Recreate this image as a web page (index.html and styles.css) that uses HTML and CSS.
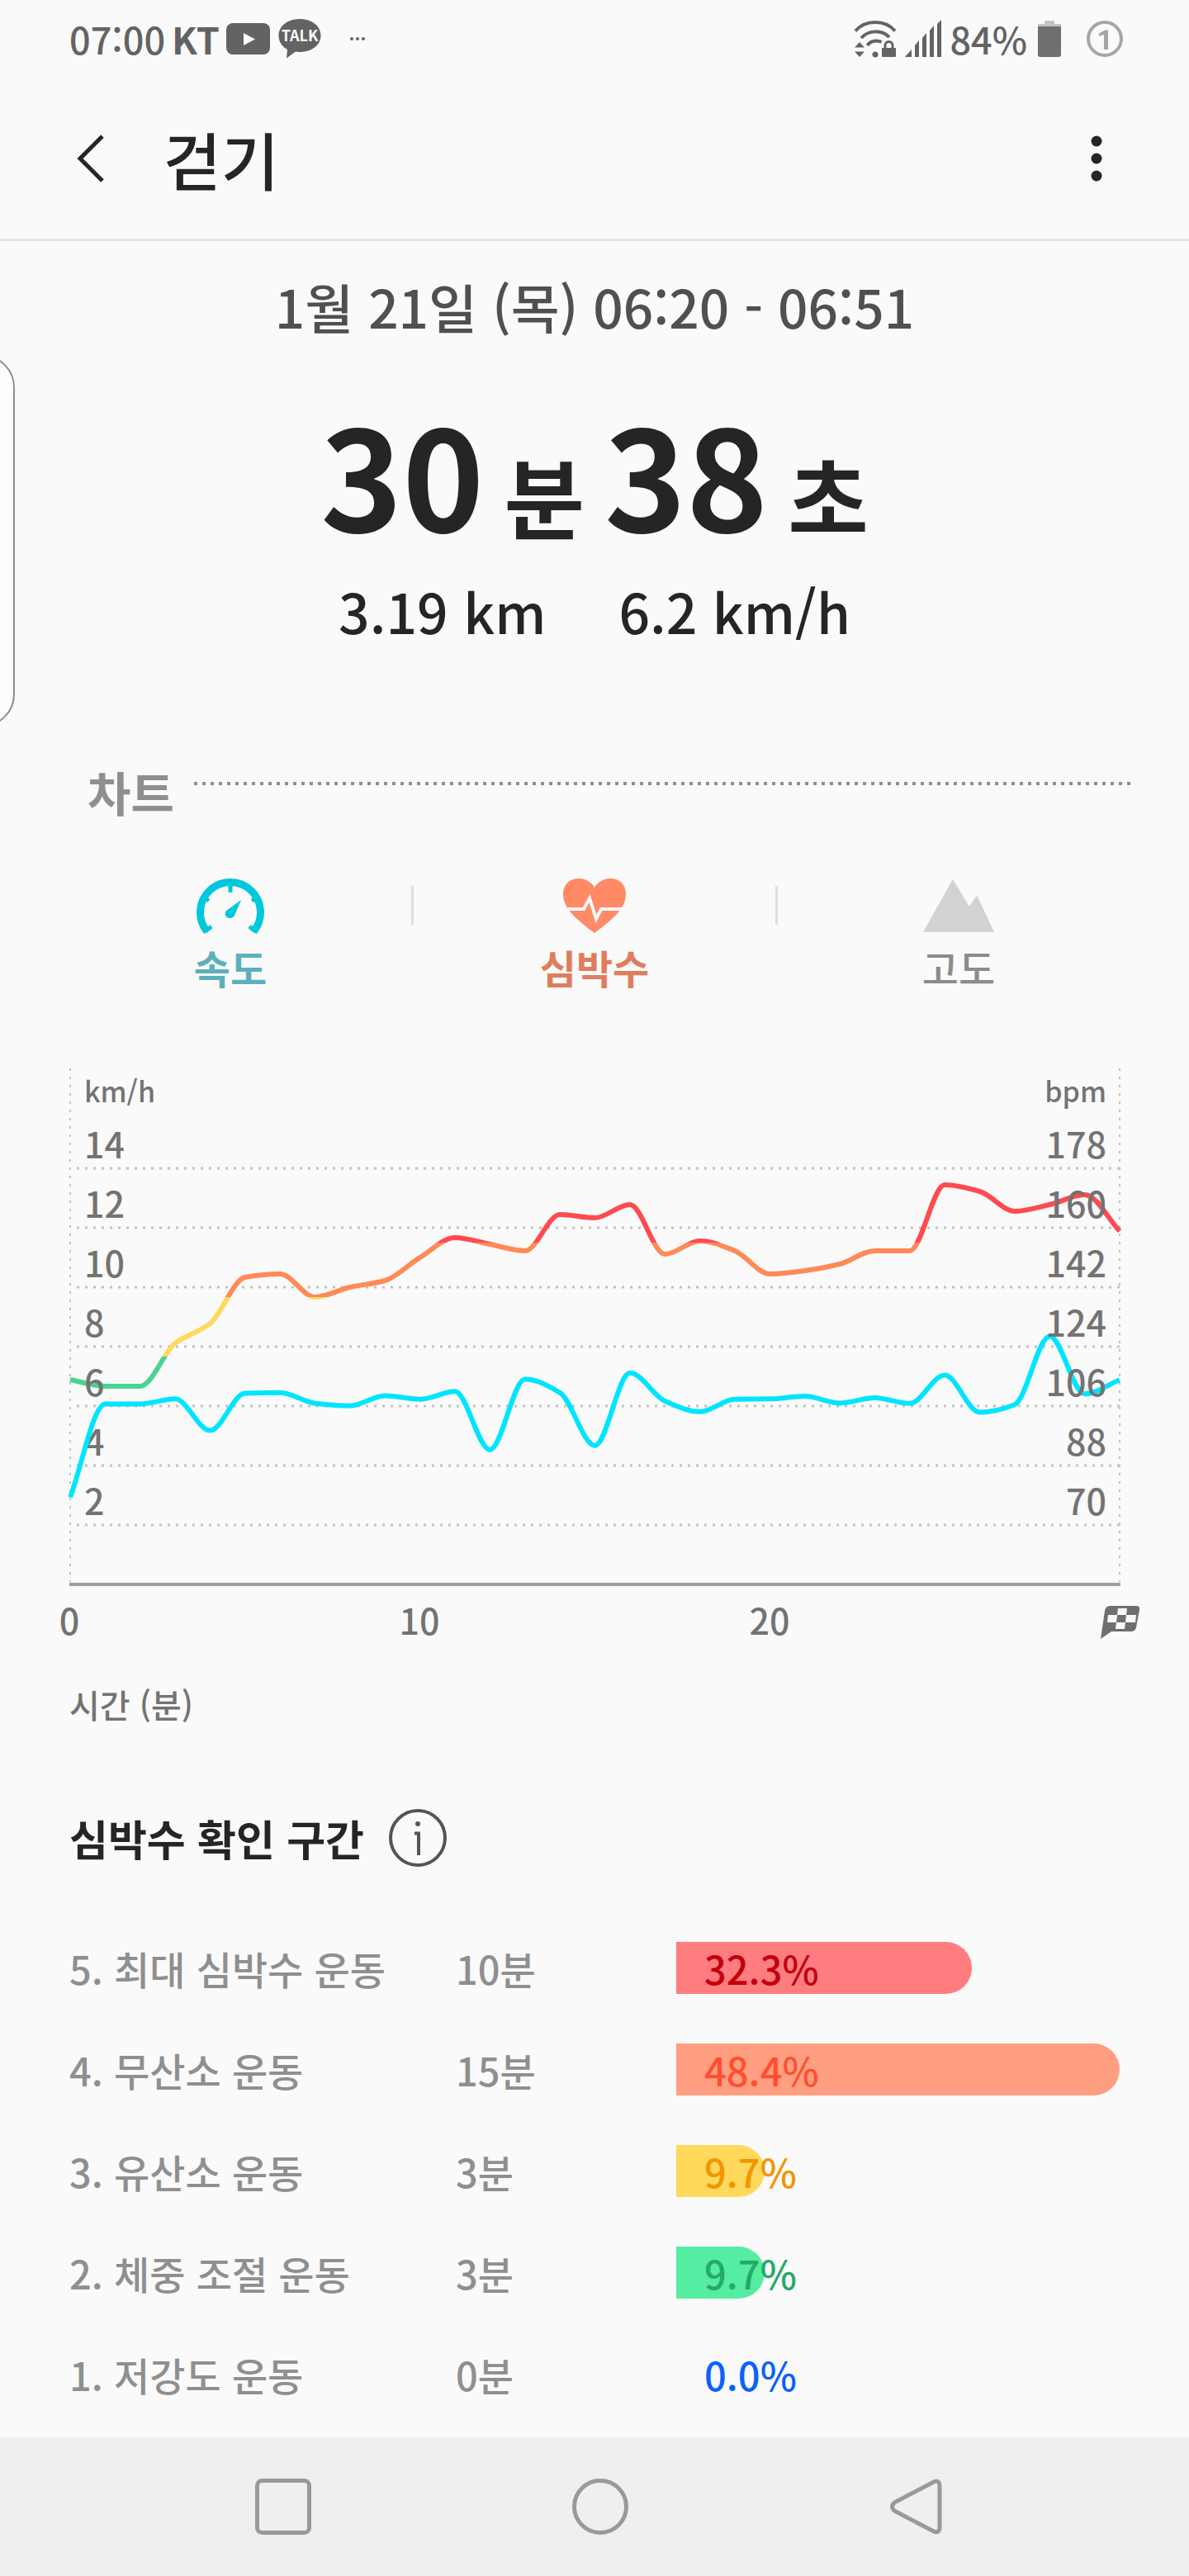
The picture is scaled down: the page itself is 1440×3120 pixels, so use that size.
FILE: index.html
```html
<!DOCTYPE html>
<html lang="ko">
<head>
  <meta charset="UTF-8" />
  <meta name="viewport" content="width=device-width, initial-scale=1.0" />
  <title>걷기</title>
  <link rel="stylesheet" href="styles.css">
</head>

<body>
  <!-- Status bar -->
  <div class="status-bar">
    <div class="status-left">
      <span class="clock">07:00</span>
      <span class="carrier">KT</span>
      <svg class="ic-video" width="53" height="40" viewBox="0 0 53 40">
        <rect width="53" height="38" y="1" rx="8" fill="#636363"/>
        <path d="M21 13v15l14-7.5z" fill="#fafafa"/>
      </svg>
      <svg class="ic-talk" width="52" height="48" viewBox="0 0 52 48">
        <path d="M26 0C11.500 0 0.500 8.500 0.500 20c0 7.500 4 13.500 10.500 17L10 47.500l11-8c1.600.3 3.300.5 5 .5 14.500 0 25.500-8.500 25.500-20S40.500 0 26 0z" fill="#636363"/>
        <text x="26" y="27" class="talk-text">TALK</text>
      </svg>
      <svg class="ic-more" width="20" height="6" viewBox="0 0 20 6" fill="#636363">
        <circle cx="3" cy="3" r="2"/><circle cx="10" cy="3" r="2"/><circle cx="17" cy="3" r="2"/>
      </svg>
    </div>
    <div class="status-right">
      <svg width="52" height="46" viewBox="0 0 52 46">
        <g fill="none" stroke="#636363" stroke-width="4">
          <path d="M2 13.500C14-.5 38-.5 50 13.500"/>
          <path d="M9 22c9-10 25-10 34-1"/>
          <path d="M16.500 31c4-6 12-6.500 17-4"/>
        </g>
        <path d="M7 27l6 6.500H1zM7 45l6-6.500H1z" fill="#636363"/>
        <circle cx="26" cy="42" r="3.500" fill="#636363"/>
        <path d="M38 35v-4c0-6 9-6 9 0v4" fill="none" stroke="#636363" stroke-width="3"/>
        <rect x="34" y="34" width="17" height="11" rx="1" fill="#636363"/>
      </svg>
      <svg width="46" height="46" viewBox="0 0 46 46" fill="#636363">
        <path d="M1 45l8-9v9zM13 45V31l5-6v20zM22 45V22l5-6v29zM31 45V13l5-6v38zM40 45V5l5-5v45z"/>
      </svg>
      <span class="battery-text">84%</span>
      <svg class="ic-battery" width="28" height="46" viewBox="0 0 28 46">
        <path d="M0 9V5h8V1h12v4h8v4z" fill="#c4c4c4"/>
        <path d="M0 8h28v34a3 3 0 0 1-3 3H3a3 3 0 0 1-3-3z" fill="#6f6f6f"/>
      </svg>
      <svg class="ic-sim" width="44" height="46" viewBox="0 0 44 46">
        <circle cx="22" cy="23" r="20" fill="none" stroke="#a6a6a6" stroke-width="4"/>
        <path d="M15 16.500l7-4h4V36h-5V18l-6 2z" fill="#a6a6a6"/>
      </svg>
    </div>
  </div>

  <header class="app-bar">
    <button type="button" class="icon-btn" aria-label="뒤로">
      <svg width="36" height="60" viewBox="0 0 36 60">
        <path d="M32 3L5 30l27 27" fill="none" stroke="#252525" stroke-width="5"/>
      </svg>
    </button>
    <h1>걷기</h1>
    <button type="button" class="icon-btn" aria-label="더보기">
      <svg width="16" height="60" viewBox="0 0 16 60" fill="#252525">
        <circle cx="8" cy="9" r="6.500"/><circle cx="8" cy="30" r="6.500"/><circle cx="8" cy="51" r="6.500"/>
      </svg>
    </button>
  </header>

  <div class="edge-handle"></div>

  <main>
    <!-- Workout summary -->
    <section class="summary">
      <p class="date">1월 21일 (목) 06:20 - 06:51</p>
      <p class="duration"><b>30</b> <span>분</span> <b>38</b> <span>초</span></p>
      <p class="stats"><span>3.19 km</span><span>6.2 km/h</span></p>
    </section>

    <div class="section-title">
      <h2>차트</h2>
      <div class="dots"></div>
    </div>

    <div class="tabs">
      <button type="button" class="tab speed">
        <svg width="88" height="68" viewBox="0 0 88 68">
          <path d="M16 65.500A36.500 36.500 0 1 1 72 65.500" fill="none" stroke="#00c8dc" stroke-width="9"/>
          <path d="M44 8v10M10 23l8 5M78 23l-8 5M14 65l7-6M74 65l-7-6" stroke="#00c8dc" stroke-width="5"/>
          <path d="M57 27L39 40c-5 7 5 13 10 6z" fill="#00c8dc"/>
        </svg>
        <span>속도</span>
      </button>
      <i class="divider"></i>
      <button type="button" class="tab heart">
        <svg width="88" height="68" viewBox="0 0 88 68">
          <path d="M44 67C24 52 6 38 6 20 6 8 14 1 25 1c8 0 15 4 19 11C48 5 55 1 63 1c11 0 19 7 19 19 0 18-18 32-38 47z" fill="#ff8a65"/>
          <path d="M12 38h19l7-13 8 25 6-12h25" fill="none" stroke="#fafafa" stroke-width="4"/>
        </svg>
        <span>심박수</span>
      </button>
      <i class="divider"></i>
      <button type="button" class="tab altitude">
        <svg width="88" height="68" viewBox="0 0 88 68">
          <path d="M1 66L37 2l20 33 9-14 21 45z" fill="#d2d2d2"/>
        </svg>
        <span>고도</span>
      </button>
    </div>

    <!-- Speed / heart rate chart, lines are drawn by chart.js -->
    <svg class="chart" viewBox="0 0 1440 720">
      <defs>
        <linearGradient id="zones" gradientUnits="userSpaceOnUse" x1="0" y1="0" x2="0" y2="639">
          <stop offset="0.352" stop-color="#ff4a4f"/>
          <stop offset="0.352" stop-color="#ff8a56"/>
          <stop offset="0.455" stop-color="#ff8a56"/>
          <stop offset="0.455" stop-color="#ffd95a"/>
          <stop offset="0.568" stop-color="#ffd95a"/>
          <stop offset="0.568" stop-color="#4bd392"/>
        </linearGradient>
      </defs>
      <g id="grid" class="grid"></g>
      <path class="side" d="M85 14V636M1356 14V636"/>
      <path class="axis" d="M84 639H1357"/>
      <path id="hr-line" class="line hr"/>
      <g id="left-labels" class="label">
        <text x="102" y="55" class="unit">km/h</text>
      </g>
      <path id="speed-line" class="line sp"/>
      <g id="right-labels" class="label end">
        <text x="1340" y="55" class="unit">bpm</text>
      </g>
      <g class="label mid">
        <text x="84" y="700">0</text>
        <text x="508" y="700">10</text>
        <text x="932" y="700">20</text>
      </g>
      <g>
        <path d="M1344 665h32q5 0 4 5l-4 21q-1 5-6 5h-24l-13 9 5-34q1-6 6-6z" fill="#6f6f6f"/>
        <path d="M1354 668h11l-1 8h-11zM1342 676h11l-1 9h-11zM1364 676h12l-1 9h-12zM1352 685h11l-1 8h-11z" fill="#fafafa"/>
      </g>
    </svg>
    <p class="axis-name">시간 (분)</p>

    <!-- Heart rate zones -->
    <div class="zone-title">
      <h2>심박수 확인 구간</h2>
      <button type="button" class="icon-btn" aria-label="정보">
        <svg width="70" height="70" viewBox="0 0 70 70">
          <circle cx="35" cy="35" r="33" fill="none" stroke="#555" stroke-width="4"/>
          <circle cx="35" cy="18" r="3" fill="#555"/>
          <path d="M31 29.500h5V56" fill="none" stroke="#555" stroke-width="4"/>
        </svg>
      </button>
    </div>

    <table class="zones">
      <tr>
        <th scope="row">5. 최대 심박수 운동</th>
        <td class="time">10분</td>
        <td><div class="bar z5"><i style="width: 66.7%"></i><span>32.3%</span></div></td>
      </tr>
      <tr>
        <th scope="row">4. 무산소 운동</th>
        <td class="time">15분</td>
        <td><div class="bar z4"><i style="width: 100%"></i><span>48.4%</span></div></td>
      </tr>
      <tr>
        <th scope="row">3. 유산소 운동</th>
        <td class="time">3분</td>
        <td><div class="bar z3"><i style="width: 20%"></i><span>9.7%</span></div></td>
      </tr>
      <tr>
        <th scope="row">2. 체중 조절 운동</th>
        <td class="time">3분</td>
        <td><div class="bar z2"><i style="width: 20%"></i><span>9.7%</span></div></td>
      </tr>
      <tr>
        <th scope="row">1. 저강도 운동</th>
        <td class="time">0분</td>
        <td><div class="bar z1"><i style="width: 0%"></i><span>0.0%</span></div></td>
      </tr>
    </table>
  </main>

  <nav class="nav-bar">
    <button type="button" class="icon-btn" aria-label="최근 앱">
      <svg width="70" height="70" viewBox="0 0 70 70">
        <rect x="3.500" y="3.500" width="63" height="63" rx="6" fill="none" stroke="#999" stroke-width="5"/>
      </svg>
    </button>
    <button type="button" class="icon-btn" aria-label="홈">
      <svg width="70" height="70" viewBox="0 0 70 70">
        <circle cx="35" cy="35" r="31.500" fill="none" stroke="#999" stroke-width="5"/>
      </svg>
    </button>
    <button type="button" class="icon-btn" aria-label="이전">
      <svg width="70" height="70" viewBox="0 0 70 70">
        <path d="M55 5.500L9 29.500q-7 5.500 0 11L55 64.500q8 4 8-5v-49q0-9-8-5z" fill="none" stroke="#999" stroke-width="5"/>
      </svg>
    </button>
  </nav>

  <script src="chart.js"></script>
</body>
</html>
```

FILE: styles.css
```css
* {
  box-sizing: border-box;
}

body {
  margin: 0;
  min-height: 100vh;
  display: flex;
  flex-direction: column;
  position: relative;
  overflow-x: hidden;
  background-color: #fafafa;
  color: #252525;
  font-family: "Noto Sans CJK KR", sans-serif;
  font-weight: 500;
}

h1, h2, p {
  margin: 0;
}

svg {
  display: block;
  flex-shrink: 0;
}

button {
  padding: 0;
  border: none;
  background: none;
  font: inherit;
  cursor: pointer;
}

/* Status bar */
.status-bar {
  display: flex;
  justify-content: space-between;
  height: 94px;
  padding: 0 80px 0 84px;
  font-size: 45px;
  line-height: 94px;
  color: #636363;
}

.status-left, .status-right {
  display: flex;
  align-items: center;
}

.carrier {
  margin: 0 8px;
  font-weight: 700;
}

.ic-talk {
  margin: 0 34px 0 10px;
}

.talk-text {
  font-size: 18px;
  font-weight: 700;
  text-anchor: middle;
  fill: #fafafa;
}

.status-right {
  gap: 9px;
}

.ic-battery {
  margin: 0 22px 0 4px;
}

/* App bar */
.app-bar {
  display: flex;
  align-items: center;
  height: 198px;
  padding: 0 104px 0 92px;
  border-bottom: 3px solid #e4e4e4;
}

.app-bar h1 {
  flex: 1;
  margin-left: 70px;
  font-size: 76px;
  font-weight: 500;
  line-height: 100px;
}

.edge-handle {
  position: absolute;
  top: 430px;
  left: -60px;
  width: 78px;
  height: 450px;
  border: 2px solid #8c8c8c;
  border-radius: 60px;
  background: #fdfdfd;
}

main {
  flex: 1;
}

/* Summary */
.summary {
  padding-top: 30px;
  text-align: center;
}

.date {
  font-size: 64px;
  line-height: 96px;
  color: #505050;
}

.duration {
  display: flex;
  justify-content: center;
  align-items: baseline;
  gap: 24px;
  margin-top: 54px;
  font-size: 168px;
  line-height: 200px;
}

.duration b, .duration span {
  font-weight: 700;
}

.duration span {
  font-size: 106px;
  line-height: 106px;
}

.stats {
  display: flex;
  justify-content: center;
  gap: 88px;
  margin-top: 22px;
  font-size: 66px;
  line-height: 90px;
}

/* Chart section */
.section-title {
  display: flex;
  gap: 24px;
  margin-top: 135px;
  padding: 0 66px 0 106px;
}

.section-title h2 {
  font-size: 57px;
  font-weight: 700;
  line-height: 78px;
  color: #8f8f8f;
}

.dots {
  flex: 1;
  height: 4px;
  margin-top: 28px;
  background: repeating-linear-gradient(90deg, #8f8f8f 0 4px, transparent 4px 10px);
}

.tabs {
  display: flex;
  margin-top: 66px;
  padding: 0 60px;
}

.tab {
  flex: 1;
  display: flex;
  flex-direction: column;
  align-items: center;
  gap: 10px;
  font-size: 48px;
  font-weight: 700;
  line-height: 60px;
}

.tab.speed {
  color: #5cb0bb;
}

.tab.heart {
  color: #e07d5c;
}

.tab.altitude {
  color: #8c8c8c;
  font-weight: 500;
}

.divider {
  width: 3px;
  height: 47px;
  margin-top: 10px;
  background: #dedede;
}

.chart {
  width: 100%;
  margin-top: 79px;
}

.grid, .side {
  fill: none;
  stroke: #c2c2c2;
  stroke-width: 3;
  stroke-dasharray: 3 7;
}

.side {
  stroke-width: 2;
}

.axis {
  stroke: #9e9e9e;
  stroke-width: 4;
}

.line {
  fill: none;
  stroke-width: 6;
  stroke-linejoin: round;
}

.hr {
  stroke: url(#zones);
}

.sp {
  stroke: #00e5ff;
}

.label {
  font-size: 43px;
  fill: #737373;
}

.unit {
  font-size: 34px;
}

.end {
  text-anchor: end;
}

.mid {
  text-anchor: middle;
}

.axis-name {
  margin-top: 34px;
  padding-left: 84px;
  font-size: 40px;
  line-height: 60px;
  color: #737373;
}

/* Zones */
.zone-title {
  display: flex;
  align-items: center;
  gap: 30px;
  margin-top: 97px;
  padding-left: 84px;
}

.zone-title h2 {
  font-size: 51px;
  font-weight: 700;
  line-height: 70px;
}

.zones {
  width: calc(100% - 168px);
  margin: 61px 84px 0;
  border-collapse: collapse;
  table-layout: fixed;
  font-size: 47px;
  line-height: 63px;
  color: #8f8f8f;
}

.zones th, .zones td {
  height: 123px;
  padding: 0;
  font-weight: 500;
  text-align: left;
}

.zones th {
  width: 468px;
}

.zones .time {
  width: 267px;
}

.bar {
  display: grid;
}

.bar i, .bar span {
  grid-area: 1 / 1;
}

.bar i {
  height: 63px;
  border-radius: 0 32px 32px 0;
}

.bar span {
  padding-left: 34px;
}

.z5 i { background: #ff7c81; }
.z5 span { color: #c4000c; }
.z4 i { background: #ff9e80; }
.z4 span { color: #ff4f30; }
.z3 i { background: #ffd95b; }
.z3 span { color: #f29500; }
.z2 i { background: #54eda1; }
.z2 span { color: #25a966; }
.z1 span { color: #0c61fb; }

/* System navigation */
.nav-bar {
  display: flex;
  justify-content: space-between;
  align-items: center;
  height: 168px;
  padding: 0 295px 0 308px;
  background: #efefef;
}
```

FILE: chart.js
```js
const speed = [2.93, 6.07, 6.07, 6.24, 5.18, 6.43, 6.45, 6.09, 6.01, 6.35, 6.23, 6.49, 4.53, 6.9, 6.45, 4.67,
  7.12, 6.17, 5.81, 6.23, 6.24, 6.33, 6.1, 6.28, 6.09, 7.04, 5.79, 6.05, 8.35, 6.41, 6.88];
const heartRate = [114, 112, 112, 125, 131, 145, 146, 139, 142, 144, 151, 157, 155, 153, 164, 163,
  167, 152, 156, 153, 146, 147, 149, 153, 153, 173, 171, 165, 167, 170, 159];

const LEFT = 85, RIGHT = 1356, BOTTOM = 639, ROW = 72;

// Monotone cubic curve through all points
function curve(ys) {
  const step = (RIGHT - LEFT) / (ys.length - 1);
  const slopes = ys.slice(1).map((y, i) => y - ys[i]);
  const tangents = ys.map((y, i) => {
    const a = slopes[i - 1], b = slopes[i];
    if (a === undefined || b === undefined) return a === undefined ? b : a;
    return a * b <= 0 ? 0 : 2 * a * b / (a + b);
  });
  let d = `M${LEFT} ${ys[0]}`;
  for (let i = 1; i < ys.length; i++) {
    const x0 = LEFT + step * (i - 1), x1 = LEFT + step * i;
    d += `C${x0 + step / 3} ${ys[i - 1] + tangents[i - 1] / 3} ${x1 - step / 3} ${ys[i] - tangents[i] / 3} ${x1} ${ys[i]}`;
  }
  return d;
}

document.getElementById('speed-line').setAttribute('d', curve(speed.map(v => BOTTOM - v * ROW / 2)));
document.getElementById('hr-line').setAttribute('d', curve(heartRate.map(v => BOTTOM - ROW - (v - 70) * ROW / 18)));

// Grid lines with a label on each side
let grid = '', left = '', right = '';
for (let i = 1; i <= 7; i++) {
  const y = BOTTOM - ROW * i;
  grid += `<path d="M${LEFT + 8} ${y}H${RIGHT}"/>`;
  left += `<text x="102" y="${y - 12}">${i * 2}</text>`;
  right += `<text x="1340" y="${y - 12}">${52 + i * 18}</text>`;
}
document.getElementById('grid').innerHTML = grid;
document.getElementById('left-labels').innerHTML += left;
document.getElementById('right-labels').innerHTML += right;
```
